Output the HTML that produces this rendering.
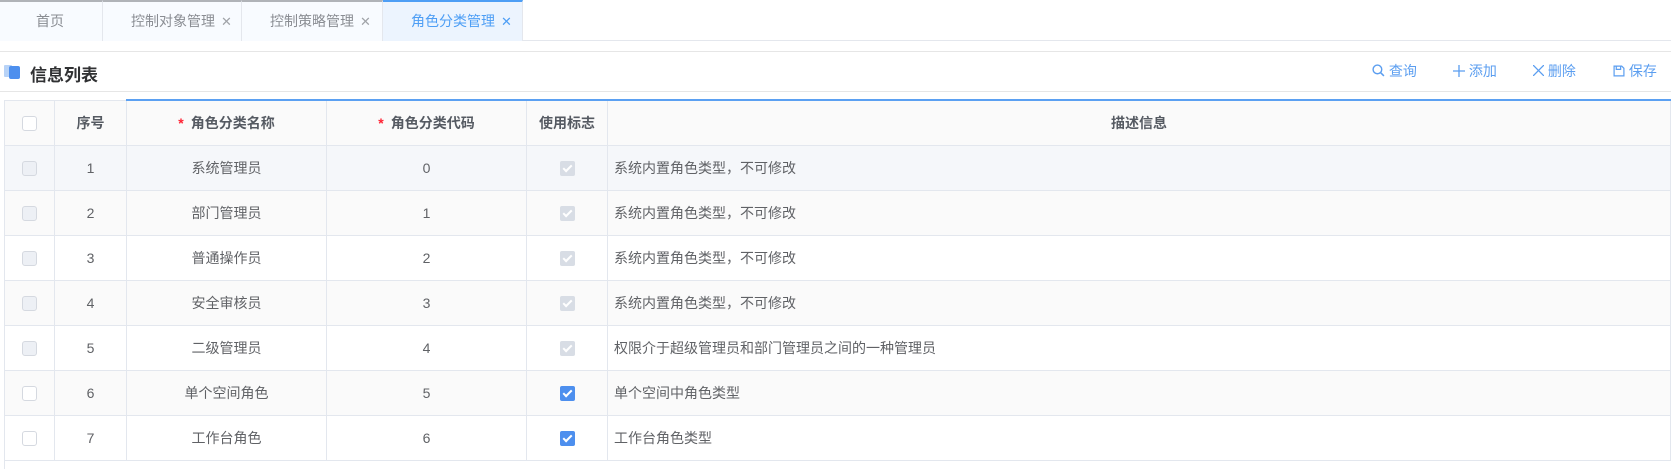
<!DOCTYPE html>
<html><head><meta charset="utf-8"><style>
*{margin:0;padding:0;box-sizing:border-box}
body{width:1671px;height:468px;background:#fff;font-family:"Liberation Sans","Noto Sans CJK SC",sans-serif;font-size:14px;color:#606266;position:relative;overflow:hidden}
.tabs{position:absolute;left:0;top:0;height:41px;width:1671px;border-bottom:1px solid #e4e7ed}
.tab{position:absolute;top:0;height:41px;border-top:2px solid #b0b3b8;border-right:1px solid #e4e7ed;background:#f8fbff;line-height:39px;color:#8a8d93;font-size:14px}
.tab .x{font-size:13px;color:#a0a3a8;margin-left:6px}
.tab.act{border-top-color:#4d9ef5;background:#ecf4fe;color:#4d9ef5}
.tab.act .x{color:#4d9ef5}
.l1{position:absolute;left:0;top:51px;width:1671px;border-top:1px solid #e6e6e6}
.l2{position:absolute;left:0;top:91px;width:1671px;border-top:1px solid #e6e6e6}
.title{position:absolute;left:30px;top:61px;font-size:17px;font-weight:bold;color:#303133}
.ico1{position:absolute;left:4px;top:65px;width:8px;height:12px;background:#b8d3f7;border-radius:1px}
.ico2{position:absolute;left:9px;top:66px;width:11px;height:13px;background:#4d8fee;border-radius:2px}
.btn{position:absolute;top:61px;color:#5b9ef0;font-size:14px}
table{position:absolute;left:4px;top:99px;border-collapse:collapse;table-layout:fixed;width:1667px}
td,th{border:1px solid #e3e7ee;text-align:center;height:45px;font-size:14px}
th{background:#fafafa;color:#555a62;font-weight:bold;border-top:2px solid #5ba0f2}
th.g{border-top:1px solid #e3e7ee}
td.d{text-align:left;padding-left:6px}
.star{color:#f23;margin-right:7px}
.cb{display:inline-block;width:15px;height:15px;border:1px solid #d5d9e0;border-radius:3px;background:#fff;vertical-align:middle}
.cb.dis{background:#edf0f5}
.ck{display:inline-block;width:15px;height:15px;border-radius:2px;vertical-align:middle;background:#d8dde5;position:relative}
.ck.on{background:#4d8fee}
.ck:after{content:"";position:absolute;left:5px;top:2px;width:3px;height:7px;border:solid #fff;border-width:0 2px 2px 0;transform:rotate(45deg)}
.r1 td{background:#f5f7fa}.r2 td{background:#fafafa}
.foot{position:absolute;left:4px;top:459px;height:10px;border-left:1px solid #e3e7ee}
</style></head><body>
<div class="tabs">
<div class="tab" style="left:0;width:103px;padding-left:36px">首页</div>
<div class="tab" style="left:103px;width:139px;padding-left:28px">控制对象管理<span class="x">✕</span></div>
<div class="tab" style="left:242px;width:141px;padding-left:28px">控制策略管理<span class="x">✕</span></div>
<div class="tab act" style="left:383px;width:140px;padding-left:28px">角色分类管理<span class="x">✕</span></div>
</div>
<div class="l1"></div>
<div class="ico1"></div><div class="ico2"></div>
<div class="title">信息列表</div>
<div class="btn" style="left:1372px"><svg width="13" height="13" viewBox="0 0 12 12" style="vertical-align:-1px"><circle cx="5" cy="5" r="4" fill="none" stroke="#5b9ef0" stroke-width="1.3"/><path d="M8 8l3 3" stroke="#5b9ef0" stroke-width="1.4"/></svg> 查询</div>
<div class="btn" style="left:1453px"><svg width="12" height="12" viewBox="0 0 11 11" style="vertical-align:-1px"><path d="M5.5 0v11M0 5.5h11" stroke="#5b9ef0" stroke-width="1.2"/></svg> 添加</div>
<div class="btn" style="left:1533px"><svg width="11" height="11" viewBox="0 0 10 10" style="vertical-align:0"><path d="M0 0l10 10M10 0L0 10" stroke="#5b9ef0" stroke-width="1.2"/></svg> 删除</div>
<div class="btn" style="left:1613px"><svg width="12" height="12" viewBox="0 0 11 11" style="vertical-align:-1px"><path d="M1 1h7l2 2v7H1z M3 1v3h4V1" fill="none" stroke="#5b9ef0" stroke-width="1.1"/></svg> 保存</div>
<div class="l2"></div>
<table>
<colgroup><col style="width:50px"><col style="width:72px"><col style="width:200px"><col style="width:200px"><col style="width:81px"><col></colgroup>
<tr><th class="g"><span class="cb"></span></th><th class="g">序号</th><th><span class="star">*</span>角色分类名称</th><th><span class="star">*</span>角色分类代码</th><th>使用标志</th><th>描述信息</th></tr>
<tr class="r1"><td><span class="cb dis"></span></td><td>1</td><td>系统管理员</td><td>0</td><td><span class="ck"></span></td><td class="d">系统内置角色类型，不可修改</td></tr>
<tr class="r2"><td><span class="cb dis"></span></td><td>2</td><td>部门管理员</td><td>1</td><td><span class="ck"></span></td><td class="d">系统内置角色类型，不可修改</td></tr>
<tr><td><span class="cb dis"></span></td><td>3</td><td>普通操作员</td><td>2</td><td><span class="ck"></span></td><td class="d">系统内置角色类型，不可修改</td></tr>
<tr class="r2"><td><span class="cb dis"></span></td><td>4</td><td>安全审核员</td><td>3</td><td><span class="ck"></span></td><td class="d">系统内置角色类型，不可修改</td></tr>
<tr><td><span class="cb dis"></span></td><td>5</td><td>二级管理员</td><td>4</td><td><span class="ck"></span></td><td class="d">权限介于超级管理员和部门管理员之间的一种管理员</td></tr>
<tr class="r2"><td><span class="cb"></span></td><td>6</td><td>单个空间角色</td><td>5</td><td><span class="ck on"></span></td><td class="d">单个空间中角色类型</td></tr>
<tr><td><span class="cb"></span></td><td>7</td><td>工作台角色</td><td>6</td><td><span class="ck on"></span></td><td class="d">工作台角色类型</td></tr>
</table>
<div class="foot"></div>
</body></html>
